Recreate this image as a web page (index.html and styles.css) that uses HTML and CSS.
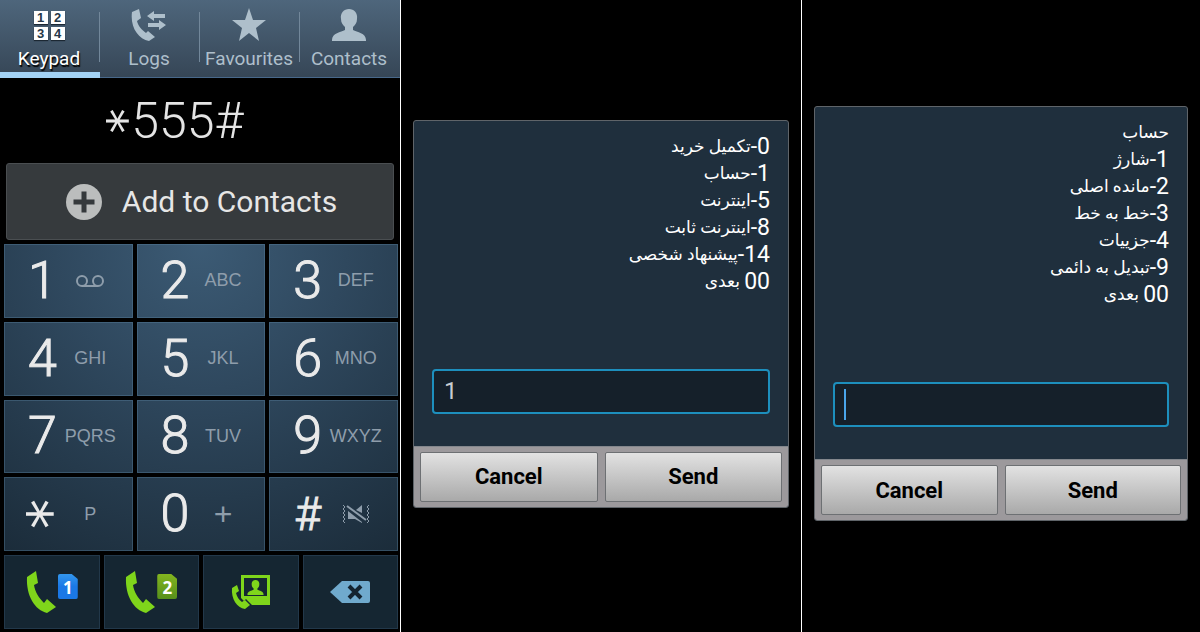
FILE: index.html
```html
<!DOCTYPE html>
<html lang="en">
<head>
    <meta charset="UTF-8">
    <meta name="viewport" content="width=device-width, initial-scale=1.0">
    <title>*555#</title>
    <link rel="stylesheet" href="styles.css">
</head>
<body>

<svg class="defs" aria-hidden="true">
    <symbol id="handset" viewBox="0 0 30 42">
        <path d="M1 6 L10 0 L12 12 L8 14 C9 21 13 27 18 32 L21 28 L30 36 L21 42 C9 39 0 25 1 6Z"/>
    </symbol>
    <symbol id="person" viewBox="0 0 36 34">
        <path d="M18 1C23 1 27 5 26 11C26 15 24 17 22 19V22C26 24 35 25 35 32V33H1V32C1 25 10 24 14 22V19C12 17 10 15 10 11C9 5 13 1 18 1Z"/>
    </symbol>
</svg>

<main class="screens">
    <section class="dialer">
        <nav class="tabs">
            <a href="#keypad" class="tab active">
                <span class="tab-icon keypad-icon"><i>1</i><i>2</i><i>3</i><i>4</i></span>
                <span>Keypad</span>
            </a>
            <a href="#logs" class="tab">
                <svg class="tab-icon logs-icon" viewBox="0 0 36 34">
                    <path d="M1 4 L8 1 L10 10 L6 13 C7 18 11 22 15 25 L17 23 L24 29 L18 33 C7 31 -1 19 1 4Z"/>
                    <path d="M16 8L23 3V6H34V10H23V13Z"/>
                    <path d="M17 15H28V12L35 17L28 22V19H17Z"/>
                </svg>
                <span>Logs</span>
            </a>
            <a href="#favourites" class="tab">
                <svg class="tab-icon" viewBox="0 0 36 34">
                    <path d="M18 0L22 12H35L25 20L28 33L18 25L8 33L11 20L1 12H14Z"/>
                </svg>
                <span>Favourites</span>
            </a>
            <a href="#contacts" class="tab">
                <svg class="tab-icon"><use href="#person"/></svg>
                <span>Contacts</span>
            </a>
        </nav>

        <div class="number"><span class="star">*</span>555#</div>

        <button class="add-contact">
            <svg viewBox="0 0 36 36">
                <circle cx="18" cy="18" r="18" fill="#bbbdbd"/>
                <path d="M18 10V26M10 18H26" stroke="#35393c" stroke-width="5" stroke-linecap="square" fill="none"/>
            </svg>
            <span>Add to Contacts</span>
        </button>

        <div class="keypad">
            <div class="keys">
                <button class="key"><b>1</b>
                    <svg class="voicemail" viewBox="0 0 30 14"><circle cx="7" cy="7" r="5"/><circle cx="23" cy="7" r="5"/><path d="M7 12H23"/></svg>
                </button>
                <button class="key"><b>2</b><small>ABC</small></button>
                <button class="key"><b>3</b><small>DEF</small></button>
                <button class="key"><b>4</b><small>GHI</small></button>
                <button class="key"><b>5</b><small>JKL</small></button>
                <button class="key"><b>6</b><small>MNO</small></button>
                <button class="key"><b>7</b><small>PQRS</small></button>
                <button class="key"><b>8</b><small>TUV</small></button>
                <button class="key"><b>9</b><small>WXYZ</small></button>
                <button class="key"><b class="star">*</b><small>P</small></button>
                <button class="key"><b>0</b><small class="plus">+</small></button>
                <button class="key"><b class="hash">#</b>
                    <svg class="silent" viewBox="0 0 28 20">
                        <path class="wave" d="M1 1L3 3L1 5L3 7L1 9L3 11L1 13L3 15L1 17L3 19M27 1L25 3L27 5L25 7L27 9L25 11L27 13L25 15L27 17L25 19"/>
                        <path class="wave slash" d="M5 2L24 16"/>
                        <path d="M14 6L20 1V9ZM6 7L20 18V19L13 15H6Z"/>
                    </svg>
                </button>
            </div>
            <div class="calls">
                <button aria-label="Call with SIM 1"><svg class="handset"><use href="#handset"/></svg><span class="sim sim-1">1</span></button>
                <button aria-label="Call with SIM 2"><svg class="handset"><use href="#handset"/></svg><span class="sim sim-2">2</span></button>
                <button aria-label="Video call">
                    <svg class="video" viewBox="0 0 40 36">
                        <path fill-rule="evenodd" d="M10 1H39V31H21L15 25L13 27L10 24ZM13 4V22H36V4Z"/>
                        <use href="#person" x="16" y="5" width="17" height="17"/>
                        <path d="M1 14L6 11L8 17L5 19C6 23 8 26 11 28L14 26L19 31L14 35C6 34 0 25 1 14Z"/>
                    </svg>
                </button>
                <button aria-label="Delete">
                    <svg class="delete" viewBox="0 0 40 22">
                        <path d="M0 11L12 0H38Q40 0 40 2V20Q40 22 38 22H12Z" fill="#70aacd"/>
                        <path d="M19 5L31 17M31 5L19 17" stroke="#142430" stroke-width="4"/>
                    </svg>
                </button>
            </div>
        </div>
    </section>

    <section class="screen">
        <form class="dialog">
            <div class="dialog-body">
                <label for="reply-1" lang="fa" dir="rtl">
                    <span>0-</span>تکمیل خرید<br>
                    <span>1-</span>حساب<br>
                    <span>5-</span>اینترنت<br>
                    <span>8-</span>اینترنت ثابت<br>
                    <span>14-</span>پیشنهاد شخصی<br>
                    <span>00</span> بعدی
                </label>
                <input type="text" id="reply-1" value="1">
            </div>
            <div class="dialog-actions">
                <button type="button">Cancel</button>
                <button type="button">Send</button>
            </div>
        </form>
    </section>

    <section class="screen">
        <form class="dialog">
            <div class="dialog-body">
                <label for="reply-2" lang="fa" dir="rtl">
                    حساب<br>
                    <span>1-</span>شارژ<br>
                    <span>2-</span>مانده اصلی<br>
                    <span>3-</span>خط به خط<br>
                    <span>4-</span>جزییات<br>
                    <span>9-</span>تبدیل به دائمی<br>
                    <span>00</span> بعدی
                </label>
                <div class="field">
                    <input type="text" id="reply-2">
                    <span class="caret"></span>
                </div>
            </div>
            <div class="dialog-actions">
                <button type="button">Cancel</button>
                <button type="button">Send</button>
            </div>
        </form>
    </section>
</main>

</body>
</html>
```

FILE: styles.css
```css
* {
    box-sizing: border-box;
}

body {
    margin: 0;
    background: #000;
    color: #fff;
    font-family: Roboto, "DejaVu Sans", sans-serif;
}

button, input {
    font-family: inherit;
    margin: 0;
    padding: 0;
}

button {
    cursor: pointer;
}

.defs {
    display: none;
}

.screens {
    display: grid;
    grid-template-columns: 400fr 401fr 399fr;
    min-height: 100vh;
}

.dialer, .screen {
    background: #000;
}

.dialer {
    display: flex;
    flex-direction: column;
}

/* tabs */

.tabs {
    display: grid;
    grid-template-columns: repeat(4, 1fr);
    height: 78px;
    background: linear-gradient(#4e667c, #364656);
    border-bottom: 1px solid #48688a;
}

.tab {
    display: flex;
    flex-direction: column;
    align-items: center;
    padding: 8px 2px 0 0;
    color: #aebfcb;
    fill: #aebfcb;
    font-size: 19px;
    line-height: 26px;
    text-decoration: none;
    border-bottom: 6px solid transparent;
    background: linear-gradient(#72879a, #72879a) right 12px / 1px 50px no-repeat;
}

.tab:last-child {
    background: none;
}

.tab.active {
    color: #fff;
    text-shadow: 1px 2px 1px #000;
    border-color: #a3d2f5;
}

.tab-icon {
    width: 36px;
    height: 34px;
    margin-bottom: 4px;
}

.keypad-icon {
    display: grid;
    grid-template-columns: 14px 14px;
    grid-auto-rows: 13px;
    gap: 3px;
    place-content: center;
}

.keypad-icon i {
    background: #fff;
    color: #263848;
    font: bold 13px/13px "Liberation Sans", sans-serif;
    text-align: center;
    text-shadow: none;
    box-shadow: 0 1px 1px #1c2833;
}

/* dialled number */

.number {
    display: flex;
    align-items: center;
    justify-content: center;
    height: 85px;
    padding-right: 50px;
    color: #e4e4e4;
    font-size: 50px;
    font-weight: 300;
}

/* turned so that one arm lies flat */
.star {
    margin-bottom: -0.4em;
    font-family: "DejaVu Sans", sans-serif;
    font-weight: 400;
    line-height: 1;
    transform: rotate(90deg);
    transform-origin: 50% 30%;
}

.add-contact {
    position: relative;
    display: flex;
    align-items: center;
    justify-content: center;
    gap: 20px;
    height: 77px;
    margin: 0 6px 4px;
    padding-left: 3px;
    border: 1px solid #4a4e51;
    border-radius: 3px;
    background: #363a3d;
    color: #e6e6e6;
    font-size: 30px;
}

.add-contact svg {
    width: 36px;
    height: 36px;
}

/* keys */

.keypad {
    display: flex;
    flex: 1;
    flex-direction: column;
    gap: 4px;
    padding: 0 2px 3px 4px;
}

.keys {
    display: grid;
    flex: 1;
    grid-template-columns: repeat(3, 1fr);
    grid-auto-rows: 1fr;
    gap: 4px;
    background: radial-gradient(circle at 50% 0, #3c5b75, #2f485e 40%, #1b2c3a 100%);
}

.key, .calls button {
    border: 1px solid rgba(90, 130, 160, 0.4);
    background: none;
}

/* the wide shadow paints the black gaps over the shared gradient */
.key {
    display: grid;
    grid-template-columns: 48px 48px;
    place-content: center;
    place-items: center;
    padding-right: 4px;
    box-shadow: 0 0 0 4px #000;
    color: #eaeaea;
}

.key b {
    font-size: 52px;
    font-weight: 300;
    line-height: 56px;
    -webkit-text-stroke: 1px #eaeaea;
}

.key .star {
    font-size: 60px;
    font-weight: 400;
    line-height: 1;
    -webkit-text-stroke: 0;
}

.key .hash {
    font-size: 46px;
}

.key small {
    display: flex;
    justify-content: center;
    width: 48px;
    color: #8e9dab;
    font: 18px "Liberation Sans", sans-serif;
}

.key .plus {
    font-size: 32px;
}

.voicemail {
    width: 30px;
    height: 14px;
    fill: none;
    stroke: #8e9dab;
    stroke-width: 2;
}

.silent {
    width: 28px;
    height: 20px;
    fill: #8e9dab;
}

.wave {
    fill: none;
    stroke: #8e9dab;
}

.slash {
    stroke-width: 2;
}

.calls {
    position: relative;
    display: grid;
    grid-template-columns: repeat(4, 1fr);
    gap: 4px;
    height: 74px;
}

.calls button {
    display: flex;
    align-items: center;
    justify-content: center;
    gap: 2px;
    border-color: #22384a;
    background: #152632;
    fill: #7fd51b;
}

.handset {
    width: 30px;
    height: 42px;
}

.sim {
    align-self: flex-start;
    width: 20px;
    height: 25px;
    margin-top: 18px;
    border-radius: 2px;
    clip-path: polygon(0 0, 70% 0, 100% 20%, 100% 100%, 0 100%);
    color: #fff;
    font: bold 17px/28px "Noto Sans", sans-serif;
}

.sim-1 {
    background: linear-gradient(#3397ee, #1a78e6 50%);
}

.sim-2 {
    background: linear-gradient(#83b51f, #57901b);
}

.video {
    width: 40px;
    height: 36px;
}

.delete {
    width: 40px;
    height: 22px;
}

/* dialogs */

.screen {
    display: flex;
    align-items: center;
    padding: 0 12px 5px;
    border-left: 1px solid #fff;
}

.dialog {
    flex: 1;
    border: 1px solid #5f6469;
    border-radius: 3px;
    background: #1f2f3d;
    overflow: hidden;
}

.dialog-body {
    padding: 12px 18px 32px;
}

.dialog label {
    display: block;
    margin-bottom: 74px;
    font-size: 17px;
    line-height: 27px;
}

.dialog label span {
    font-size: 23px;
    line-height: 1;
    vertical-align: -2px;
}

.dialog input {
    display: block;
    width: 100%;
    height: 45px;
    padding: 0 10px;
    border: 2px solid #1d8fbd;
    border-radius: 4px;
    outline: none;
    background: #15202a;
    color: #c8ccd0;
    font-size: 24px;
}

.field {
    position: relative;
}

.caret {
    position: absolute;
    top: 7px;
    left: 11px;
    width: 2px;
    height: 31px;
    background: #4aa5ea;
}

.dialog-actions {
    display: grid;
    grid-template-columns: 1fr 1fr;
    gap: 7px;
    padding: 5px 6px;
    border-top: 1px solid #83878d;
    background: #9c999c;
}

.dialog-actions button {
    height: 50px;
    border: 1px solid #6d7073;
    border-radius: 2px;
    background: linear-gradient(#e2e2e2, #a9a9a9);
    color: #000;
    font-size: 22px;
    font-weight: bold;
}
```
